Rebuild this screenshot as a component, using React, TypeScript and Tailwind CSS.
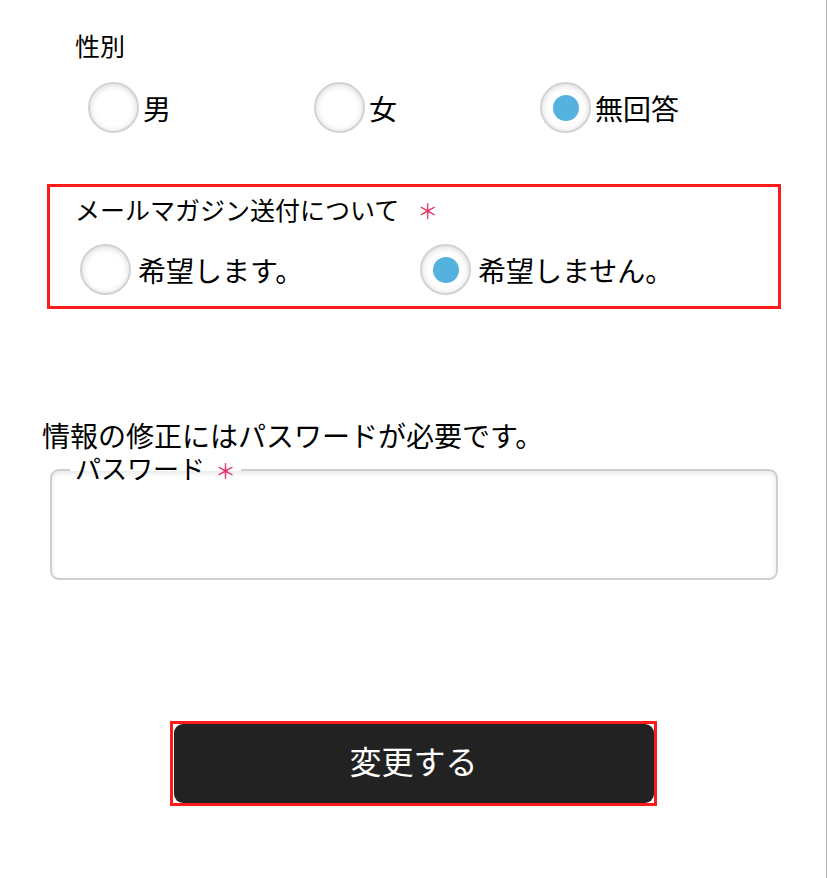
import { useState } from "react";

const font = { fontFamily: '"Noto Sans CJK JP", "Noto Sans", sans-serif' };

type RadioProps = {
    label: string;
    checked: boolean;
    onSelect: () => void;
    gap: string;
};

const Radio = ({ label, checked, onSelect, gap }: RadioProps) => {
    return (
        <label className="flex items-center cursor-pointer" onClick={onSelect}>
            <span className="flex items-center justify-center w-[51px] h-[51px] shrink-0 rounded-full border-2 border-[#d2d2d2] bg-white shadow-[inset_0_1px_6px_rgba(0,0,0,0.16)]">
                {checked && <span className="block w-[26px] h-[26px] rounded-full bg-[#55b1de]"></span>}
            </span>
            <span className={`${gap} text-[28px] leading-[36px] text-black`}>{label}</span>
        </label>
    );
};

const Required = () => <span className="text-[#e6336a] text-[21px] leading-[30px]">＊</span>;

const App = () => {
    const [gender, setGender] = useState("無回答");
    const [mail, setMail] = useState("no");

    return (
        <div style={font} className="w-[827px] min-h-[878px] bg-white border-r border-[#b4b4b4] flex flex-col">
            {/* 性別 */}
            <div className="mt-[30px] ml-[75px] text-[25px] leading-[30px] text-black">性別</div>
            <div className="mt-[22px] ml-[88px] flex">
                {["男", "女", "無回答"].map((g) => (
                    <div key={g} className="w-[226px]">
                        <Radio label={g} checked={gender === g} onSelect={() => setGender(g)} gap="ml-[4px]" />
                    </div>
                ))}
            </div>

            {/* メールマガジン */}
            <div className="mt-[51px] ml-[47px] w-[734px] border-[3px] border-[#ff1a1a] pt-[6px] pb-[11px] pl-[25px]">
                <div className="flex items-center text-[25px] leading-[30px] text-black">
                    <span>メールマガジン送付について</span>
                    <span className="ml-[18px]"><Required /></span>
                </div>
                <div className="mt-[19px] ml-[5px] flex">
                    <div className="w-[340px]">
                        <Radio label="希望します。" checked={mail === "yes"} onSelect={() => setMail("yes")} gap="ml-[7px]" />
                    </div>
                    <div>
                        <Radio label="希望しません。" checked={mail === "no"} onSelect={() => setMail("no")} gap="ml-[7px]" />
                    </div>
                </div>
            </div>

            {/* パスワード */}
            <p className="mt-[110px] ml-[42px] text-[28px] leading-[32px] text-black">情報の修正にはパスワードが必要です。</p>
            <fieldset className="mt-[4px] ml-[50px] w-[728px] border-2 border-[#cfcfcf] rounded-[9px] pl-[18px] shadow-[inset_0_2px_5px_rgba(0,0,0,0.1)]">
                <legend className="px-[5px] text-[26px] leading-[26px] text-black">
                    パスワード<span className="ml-[10px]"><Required /></span>
                </legend>
                <input type="password" className="block w-full h-[93px] outline-none bg-transparent text-[24px]" />
            </fieldset>

            {/* 変更する */}
            <div className="mt-[141px] self-center border-[3px] border-[#ff1a1a] bg-white pl-px">
                <button className="w-[480px] h-[79px] rounded-[9px] bg-[#222222] text-white text-[32px] leading-none pb-[8px] flex items-center justify-center">
                    変更する
                </button>
            </div>
        </div>
    );
};

export default App;
